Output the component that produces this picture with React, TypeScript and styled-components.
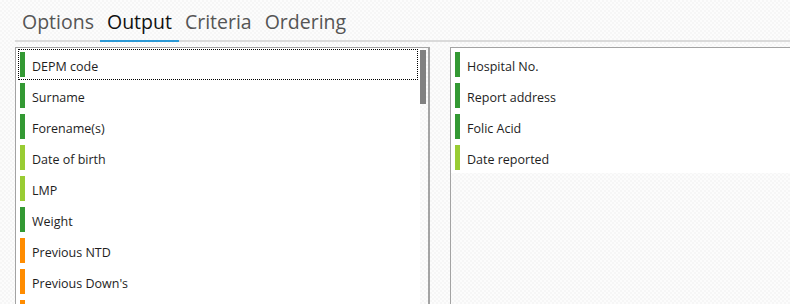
import React from "react";
import styled, {createGlobalStyle} from "styled-components";

const GlobalStyle = createGlobalStyle`
  html, body {
    margin: 0;
    padding: 0;
    overflow: hidden;
  }
  body {
    font-family: "Open Sans", "Noto Sans", sans-serif;
    background-color: #fbfbfb;
    background-image: repeating-conic-gradient(#f6f6f6 0 25%, #fcfcfc 0 50%);
    background-size: 4px 4px;
  }
`

type Level = "required" | "optional" | "warning";

const barColors: Record<Level, string> = {
    required: "#339933",
    optional: "#99cc33",
    warning: "#ff8c00",
};

type FieldType = {
    name: string
    level: Level
}

const available: FieldType[] = [
    {name: "DEPM code", level: "required"},
    {name: "Surname", level: "required"},
    {name: "Forename(s)", level: "required"},
    {name: "Date of birth", level: "optional"},
    {name: "LMP", level: "optional"},
    {name: "Weight", level: "required"},
    {name: "Previous NTD", level: "warning"},
    {name: "Previous Down's", level: "warning"},
    {name: "", level: "warning"},
];

const selected: FieldType[] = [
    {name: "Hospital No.", level: "required"},
    {name: "Report address", level: "required"},
    {name: "Folic Acid", level: "required"},
    {name: "Date reported", level: "optional"},
];

const tabs = ["Options", "Output", "Criteria", "Ordering"];

export default function App() {
    return (
        <Page>
            <GlobalStyle/>
            <TabBar>
                {tabs.map(tab => <Tab key={tab} active={tab === "Output"}>{tab}</Tab>)}
            </TabBar>

            <Panels>
                <LeftList>
                    <Rows>
                        {available.map((field, i) => (
                            <Row key={i} focused={i === 0}>
                                <Bar color={barColors[field.level]}/>
                                <Label>{field.name}</Label>
                            </Row>
                        ))}
                    </Rows>
                    <ScrollTrack>
                        <Thumb/>
                    </ScrollTrack>
                </LeftList>

                <RightList>
                    <Rows>
                        {selected.map(field => (
                            <Row key={field.name}>
                                <Bar color={barColors[field.level]}/>
                                <Label>{field.name}</Label>
                            </Row>
                        ))}
                    </Rows>
                </RightList>
            </Panels>
        </Page>
    )
}

const Page = styled.div`
  width: 790px;
  height: 304px;
  overflow: hidden;
`
const TabBar = styled.div`
  display: flex;
  height: 40px;
  margin-left: 15px;
  padding-left: 7px;
  border-bottom: 2px solid #dadada;
  align-items: flex-end;
`
const Tab = styled.div<{ active?: boolean }>`
  font-size: 19.5px;
  line-height: 26px;
  padding: 0 7px 5px 0;
  margin-right: 6px;
  color: ${p => p.active ? "#111111" : "#555555"};
  position: relative;

  &:nth-child(2) {
    padding-left: 7px;
    margin-left: -7px;
  }

  ${p => p.active && `
    &:after {
      content: "";
      position: absolute;
      left: 0;
      right: 0;
      bottom: -2px;
      height: 2px;
      background: #2d9ad6;
    }
  `}
`
const Panels = styled.div`
  display: flex;
  gap: 20px;
  padding: 5px 0 0 15px;
`
const LeftList = styled.div`
  display: flex;
  width: 413px;
  height: 300px;
  border: 1px solid #a3a3a3;
  flex-shrink: 0;
`
const Rows = styled.div`
  flex: 1;
  background: #ffffff;
  padding-top: 1px;
  align-self: flex-start;
`
const ScrollTrack = styled.div`
  width: 8px;
  padding-top: 2px;
  border-right: 1px solid #a3a3a3;
`
const Thumb = styled.div`
  width: 6px;
  height: 54px;
  background: #808080;
`
const RightList = styled.div`
  width: 400px;
  height: 300px;
  border: 1px solid #a3a3a3;
  flex-shrink: 0;
  display: flex;
`
const Row = styled.div<{ focused?: boolean }>`
  display: flex;
  align-items: flex-start;
  height: 31px;
  box-sizing: border-box;
  padding: 3px 0 0 2px;
  margin: 0 2px;
  outline: ${p => p.focused ? "1px dotted #000" : "none"};
  outline-offset: -1px;
`
const Bar = styled.span<{ color: string }>`
  width: 5px;
  height: 25px;
  background: ${p => p.color};
  margin-right: 7px;
  flex-shrink: 0;
`
const Label = styled.span`
  font-size: 12.5px;
  line-height: 17px;
  padding-top: 6px;
  color: #1e1e1e;
  white-space: nowrap;
`
